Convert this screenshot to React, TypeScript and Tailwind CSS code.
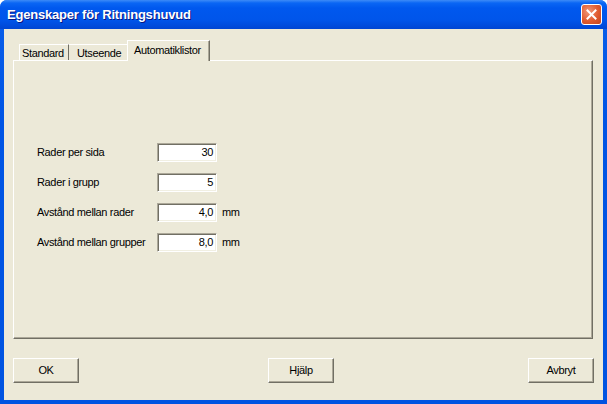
import React from "react";

const rows = [
  { label: "Rader per sida", value: "30", unit: "" },
  { label: "Rader i grupp", value: "5", unit: "" },
  { label: "Avstånd mellan rader", value: "4,0", unit: "mm" },
  { label: "Avstånd mellan grupper", value: "8,0", unit: "mm" },
];

function Button({ label }: { label: string }) {
  return (
    <button
      type="button"
      className="flex h-[25px] w-[66px] items-center justify-center border border-t-white border-l-white border-r-[#716F64] border-b-[#716F64] bg-[#ECE9D8] text-[11px] text-black shadow-[inset_-1px_-1px_0_#ACA899]"
    >
      {label}
    </button>
  );
}

export default function App() {
  return (
    <div className="h-[404px] w-[607px] bg-white font-['Liberation_Sans',Arial,sans-serif]">
      <div className="flex h-[404px] w-[607px] flex-col rounded-t-[7px] bg-[linear-gradient(to_bottom,#0A5FEA,#0055E5_30%,#0053E1)]">
        {/* title bar */}
        <div className="flex h-[29px] items-center justify-between rounded-t-[7px] bg-[linear-gradient(to_bottom,#3D8BF7_0px,#0A66F4_3px,#0058EE_8px,#0055EA_20px,#0049D8_27px,#0046D2_29px)] pl-[7px] pr-[5px]">
          <span className="text-[13px] font-bold tracking-[-0.2px] text-white [text-shadow:1px_1px_0_#0A1883]">
            Egenskaper för Ritningshuvud
          </span>
          <div className="flex h-[21px] w-[21px] items-center justify-center rounded-[3px] border border-white bg-[radial-gradient(circle_at_35%_35%,#F0987A,#E05A2E_55%,#C2441E)]">
            <svg width="11" height="11" viewBox="0 0 11 11">
              <path d="M1.5 1.5 L9.5 9.5 M9.5 1.5 L1.5 9.5" stroke="white" strokeWidth="2" strokeLinecap="square" />
            </svg>
          </div>
        </div>

        {/* client area */}
        <div className="mx-[4px] mb-[4px] flex flex-1 flex-col bg-[#ECE9D8] text-[11px] tracking-[-0.35px] text-black">
          <div className="flex flex-col pl-[9px] pr-[10px] pt-[11px]">
            {/* tabs */}
            <div className="flex h-[20px] items-end pl-[6px]">
              <div className="flex h-[16px] w-[50px] items-center border-t border-l border-r border-t-white border-l-white border-r-[#716F64] pl-[2px] pt-[1px]">
                Standard
              </div>
              <div className="flex h-[16px] w-[58px] items-center border-t border-t-white pl-[8px] pt-[1px]">
                Utseende
              </div>
              <div className="relative z-10 -mb-px flex h-[21px] w-[83px] items-center border-t border-l border-r border-t-white border-l-white border-r-[#716F64] bg-[#ECE9D8] pb-[2px] pl-[6px] shadow-[inset_-1px_0_0_#ACA899]">
                Automatiklistor
              </div>
            </div>
            {/* panel */}
            <div className="flex h-[279px] flex-col border border-t-white border-l-white border-r-[#716F64] border-b-[#716F64] pl-[23px] pt-[82px] shadow-[inset_-1px_-1px_0_#ACA899]">
              <div className="flex flex-col gap-[11px]">
                {rows.map((r) => (
                  <div key={r.label} className="flex h-[19px] items-center">
                    <span className="w-[120px]">{r.label}</span>
                    <div className="flex h-[19px] w-[60px] items-center justify-end border border-t-[#ACA899] border-l-[#ACA899] border-r-white border-b-white bg-white pr-[3px] shadow-[inset_1px_1px_0_#716F64,inset_-1px_-1px_0_#F1EFE2]">
                      {r.value}
                    </div>
                    {r.unit && <span className="ml-[5px]">{r.unit}</span>}
                  </div>
                ))}
              </div>
            </div>
          </div>
          {/* buttons */}
          <div className="flex items-center justify-between pl-[9px] pr-[9px] pt-[19px]">
            <Button label="OK" />
            <div className="mr-[5px]">
              <Button label="Hjälp" />
            </div>
            <Button label="Avbryt" />
          </div>
        </div>
      </div>
    </div>
  );
}
